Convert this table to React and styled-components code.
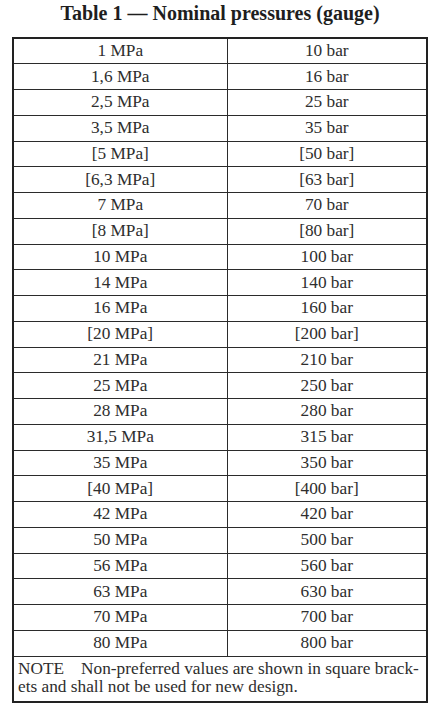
import React from "react";
import styled, { createGlobalStyle } from "styled-components";

const Global = createGlobalStyle`
  html, body { margin: 0; padding: 0; background: #fff; }
  body { font-family: "Liberation Serif", "DejaVu Serif", serif; color: #2a2a2a; }
`;

const Page = styled.div`
  width: 438px;
  padding: 0 0 0 12px;
  box-sizing: border-box;
`;

const Title = styled.h1`
  margin: 0;
  height: 37px;
  width: 416px;
  display: flex;
  align-items: center;
  justify-content: center;
  font-family: "Liberation Serif", serif;
  font-weight: bold;
  font-size: 20px;
  color: #1e1e1e;
  padding-bottom: 11px;
  box-sizing: border-box;
  white-space: nowrap;
`;

const Table = styled.table`
  width: 416px;
  border-collapse: collapse;
  border: 2px solid #222;
  table-layout: fixed;
`;

const Row = styled.tr`
  height: 25.75px;
`;

const Cell = styled.td`
  border: 1px solid #2b2b2b;
  text-align: center;
  font-size: 17.3px;
  padding: 0;
  line-height: 18px;
  vertical-align: middle;
  color: #2e2e2e;
  white-space: nowrap;
`;

const NoteCell = styled.td`
  border: 1px solid #2b2b2b;
  padding: 3px 2px 5px 4px;
  font-size: 17.3px;
  line-height: 18px;
  color: #2e2e2e;
  text-align: left;
  white-space: nowrap;
`;

const NoteLabel = styled.span`
  margin-right: 17px;
`;

const rows = [
  ["1 MPa", "10 bar"],
  ["1,6 MPa", "16 bar"],
  ["2,5 MPa", "25 bar"],
  ["3,5 MPa", "35 bar"],
  ["[5 MPa]", "[50 bar]"],
  ["[6,3 MPa]", "[63 bar]"],
  ["7 MPa", "70 bar"],
  ["[8 MPa]", "[80 bar]"],
  ["10 MPa", "100 bar"],
  ["14 MPa", "140 bar"],
  ["16 MPa", "160 bar"],
  ["[20 MPa]", "[200 bar]"],
  ["21 MPa", "210 bar"],
  ["25 MPa", "250 bar"],
  ["28 MPa", "280 bar"],
  ["31,5 MPa", "315 bar"],
  ["35 MPa", "350 bar"],
  ["[40 MPa]", "[400 bar]"],
  ["42 MPa", "420 bar"],
  ["50 MPa", "500 bar"],
  ["56 MPa", "560 bar"],
  ["63 MPa", "630 bar"],
  ["70 MPa", "700 bar"],
  ["80 MPa", "800 bar"],
];

export default function App() {
  return (
    <Page>
      <Global />
      <Title>Table 1 — Nominal pressures (gauge)</Title>
      <Table>
        <colgroup>
          <col style={{ width: "214px" }} />
          <col />
        </colgroup>
        <tbody>
          {rows.map(([a, b]) => (
            <Row key={a}>
              <Cell>{a}</Cell>
              <Cell>{b}</Cell>
            </Row>
          ))}
          <tr>
            <NoteCell colSpan={2}>
              <NoteLabel>NOTE</NoteLabel>Non-preferred values are shown in square brack-
              <br />
              ets and shall not be used for new design.
            </NoteCell>
          </tr>
        </tbody>
      </Table>
    </Page>
  );
}
